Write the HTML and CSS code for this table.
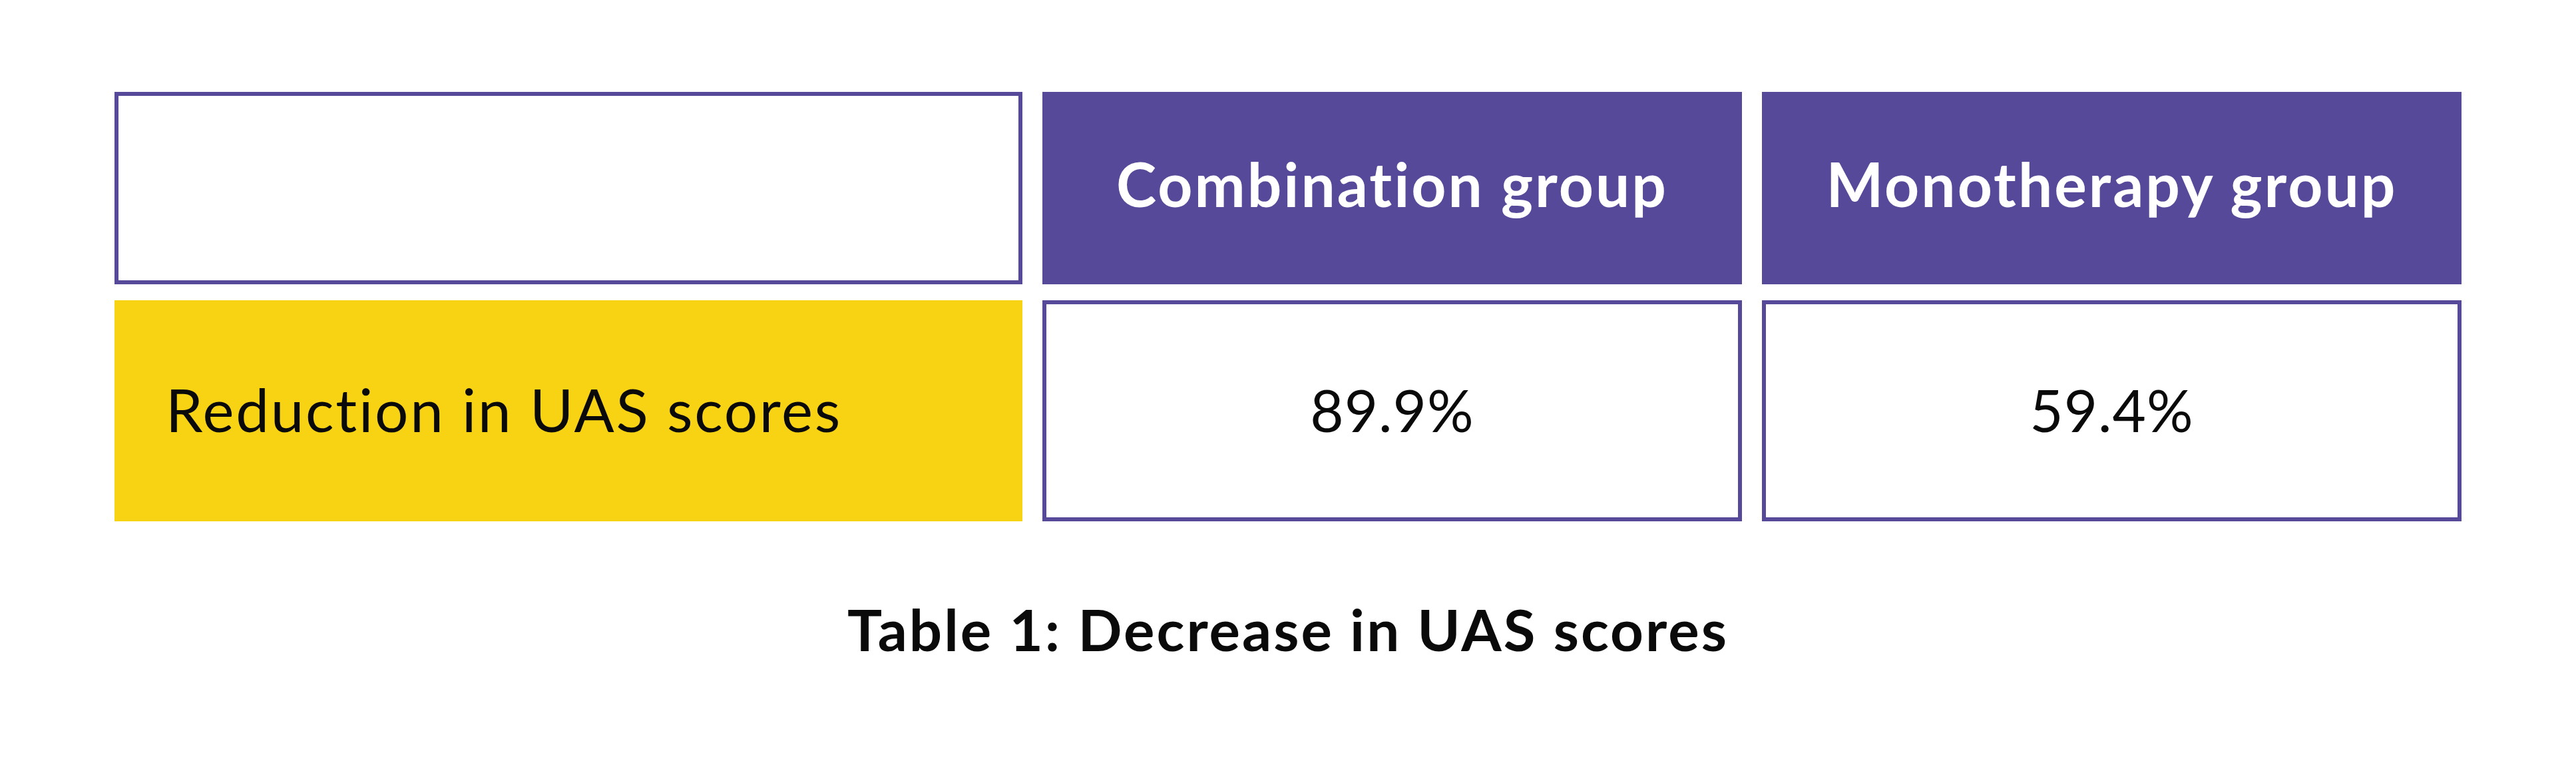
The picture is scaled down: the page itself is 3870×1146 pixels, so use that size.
FILE: index.html
```html
<!DOCTYPE html>
<html lang="en">
<head>
<meta charset="utf-8">
<title>Table 1: Decrease in UAS scores</title>
<link rel="stylesheet" href="styles.css">
</head>
<body>
<main class="page">
  <div class="table">
    <div class="cell cell-blank"></div>
    <div class="cell cell-head">Combination group</div>
    <div class="cell cell-head">Monotherapy group</div>
    <div class="cell cell-label">Reduction in UAS scores</div>
    <div class="cell cell-value">89.9%</div>
    <div class="cell cell-value">59.4%</div>
  </div>
  <p class="caption">Table 1: Decrease in UAS scores</p>
</main>
</body>
</html>
```
FILE: styles.css
```css
html, body {
  margin: 0;
  padding: 0;
  background: #ffffff;
}

.page {
  width: 3870px;
  height: 1146px;
  box-sizing: border-box;
  padding-top: 138px;
  font-family: "Lato", "Open Sans", "Liberation Sans", sans-serif;
  color: #0a0a0a;
}

.table {
  display: grid;
  grid-template-columns: 1364px 1051px 1051px;
  grid-template-rows: 289px 332px;
  column-gap: 30px;
  row-gap: 24px;
  margin-left: 172px;
}

.cell {
  box-sizing: border-box;
  display: flex;
  align-items: center;
}

.cell-blank {
  border: 6px solid #56499a;
}

.cell-head {
  background: #56499a;
  color: #ffffff;
  justify-content: center;
  font-weight: 700;
  font-size: 91px;
  letter-spacing: 3px;
  padding-bottom: 14px;
}

.cell-label {
  background: #f8d314;
  font-size: 89px;
  font-weight: 400;
  letter-spacing: 2.7px;
  padding-left: 77px;
  padding-bottom: 6px;
}

.cell-value {
  border: 6px solid #56499a;
  justify-content: center;
  font-size: 87px;
  font-weight: 400;
  letter-spacing: 1px;
  padding-bottom: 4px;
}

.caption {
  margin: 110px 0 0 0;
  text-align: center;
  font-size: 87px;
  line-height: 1.2;
  font-weight: 700;
  letter-spacing: 3px;
}
```
